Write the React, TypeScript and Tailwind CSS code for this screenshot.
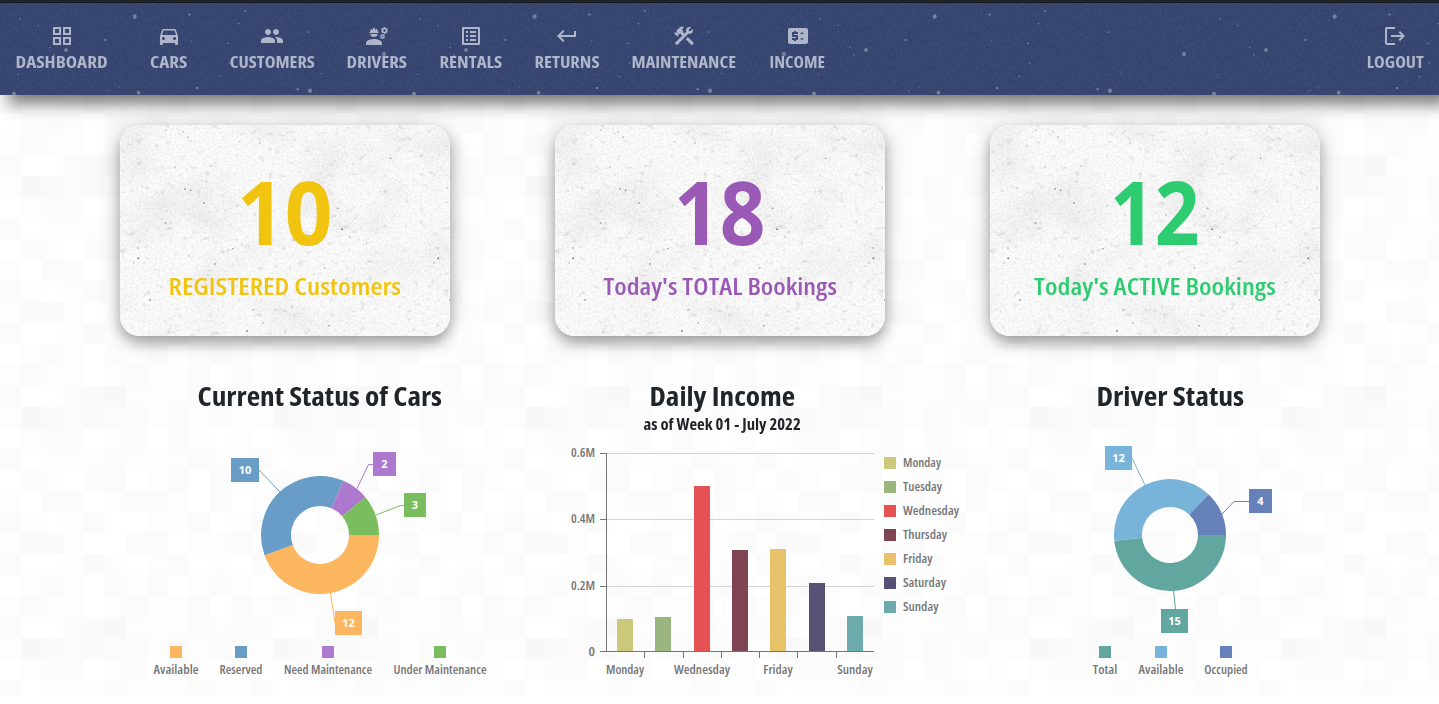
import { useLayoutEffect, useRef, useState } from "react";
import type { ReactNode } from "react";
import {
  MdDirectionsCar,
  MdPeople,
  MdEngineering,
  MdOutlineListAlt,
  MdKeyboardReturn,
  MdConstruction,
  MdPriceChange,
} from "react-icons/md";

/* ---------- text that fills a given width ---------- */

function Fit({ width, children }: { width: number; children: string }) {
  const ref = useRef<HTMLSpanElement>(null);
  const [scale, setScale] = useState(1);
  useLayoutEffect(() => {
    if (ref.current) setScale(width / ref.current.offsetWidth);
  }, [width]);
  return (
    <span className="flex justify-center" style={{ width }}>
      <span ref={ref} className="shrink-0 whitespace-nowrap" style={{ transform: `scaleX(${scale})` }}>
        {children}
      </span>
    </span>
  );
}

/* ---------- textures ---------- */

const tileShades = ["#ffffff", "#fdfdfd", "#fbfbfb", "#fafafa", "#f8f8f8"];
const tileRows = [
  "200234111212",
  "143232212121",
  "012201202101",
  "201112111211",
  "021022012021",
  "102201221020",
  "210120011201",
  "133100220112",
  "200131012010",
  "012102120121",
  "121101211202",
];

function PageTexture() {
  return (
    <svg className="absolute inset-0 -z-10" width="1439" height="695">
      <defs>
        <pattern id="tiles" x="0" y="155" width="252" height="231" patternUnits="userSpaceOnUse">
          {tileRows.map((row, r) =>
            row.split("").map((v, c) => (
              <rect key={`${r}-${c}`} x={c * 21} y={r * 21} width="21" height="21" fill={tileShades[Number(v)]} />
            )),
          )}
        </pattern>
      </defs>
      <rect width="1439" height="695" fill="url(#tiles)" />
    </svg>
  );
}

const navSpecks: [number, number, number][] = [
  [20, 19, 1], [38, 25.5, 0.8], [134.7, 16.5, 2], [189.5, 14.5, 1.3], [245, 11, 1.1], [238.5, 23.5, 1],
  [105.5, 40, 1.3], [50, 47.5, 0.8], [66, 50, 1.9], [54, 55, 0.9], [191.5, 40.5, 0.7], [228, 43.5, 1],
  [229.5, 63, 1], [308.5, 32, 1.1], [384, 54, 2], [219.5, 76.5, 0.9], [321.5, 73.5, 0.8], [18, 74.5, 0.8],
  [14, 94, 2], [138.5, 92.7, 1.7], [119.5, 87, 0.7], [109, 91, 0.8], [197, 88, 1.4], [297.7, 89.3, 1.4],
  [310, 90.7, 2],
];

function NavTexture() {
  return (
    <svg className="absolute inset-0 -z-10" width="1439" height="92">
      <defs>
        <filter id="navGrain" x="0" y="0" width="100%" height="100%">
          <feTurbulence type="fractalNoise" baseFrequency="0.5 0.3" numOctaves="3" seed="4" />
          <feColorMatrix values="0 0 0 0 1  0 0 0 0 1  0 0 0 0 1  0.7 0 0 0 -0.25" />
        </filter>
        <pattern id="navSpecks" x="0" y="-3" width="400" height="400" patternUnits="userSpaceOnUse">
          {navSpecks.map(([x, y, r], i) => (
            <ellipse key={i} cx={x} cy={y} rx={r} ry={r > 1.6 ? r * 1.1 : r * 0.7} fill="#c3ccd0" opacity={0.45} />
          ))}
        </pattern>
      </defs>
      <rect width="1439" height="92" fill="#34446f" />
      <rect width="1439" height="92" filter="url(#navGrain)" opacity="0.15" />
      <rect width="1439" height="92" fill="url(#navSpecks)" />
    </svg>
  );
}

const cardSpecks: [number, number, number][] = [
  [140, 18, 0.5], [270.7, 33.3, 0.6], [65, 64, 0.7], [70.7, 65.3, 0.7], [55, 42, 0.4], [84, 78, 0.7],
  [217.7, 83.3, 0.6], [222, 104.3, 1], [113, 123.7, 0.6], [18.3, 133.3, 1], [95, 139, 0.7], [204.7, 142.7, 0.5],
  [30, 175, 0.8], [133.3, 184.7, 0.6], [127, 206, 1], [209, 200.7, 0.6], [45.7, 98, 0.6], [176, 90, 0.5],
  [246.7, 118, 0.4], [69, 131, 0.4], [230, 112, 0.4], [234, 107, 0.4], [18, 123, 0.5], [46, 5, 0.4],
  [68, 12, 0.5], [143, 198, 0.5], [63, 7, 0.4], [91, 41, 0.4], [27, 63, 0.4], [14, 138, 0.4],
];

function CardTexture({ id }: { id: string }) {
  return (
    <svg className="absolute inset-0 -z-10" width="330" height="211">
      <defs>
        <filter id={`${id}Fine`} x="0" y="0" width="100%" height="100%">
          <feTurbulence type="fractalNoise" baseFrequency="0.42" numOctaves="3" seed="8" />
          <feColorMatrix values="0 0 0 0 0  0 0 0 0 0  0 0 0 0 0  0.7 0 0 0 -0.27" />
        </filter>
        <filter id={`${id}Cloud`} x="0" y="0" width="100%" height="100%">
          <feTurbulence type="fractalNoise" baseFrequency="0.018" numOctaves="5" seed="11" />
          <feColorMatrix values="0 0 0 0 0  0 0 0 0 0  0 0 0 0 0  0.12 0 0 0 -0.055" />
        </filter>
        <filter id={`${id}Pits`} x="0" y="0" width="100%" height="100%">
          <feTurbulence type="fractalNoise" baseFrequency="0.13 0.17" numOctaves="4" seed="21" />
          <feColorMatrix values="0 0 0 0 0.3  0 0 0 0 0.3  0 0 0 0 0.3  4 0 0 0 -2.6" />
        </filter>
        <pattern id={`${id}Specks`} width="300" height="300" patternUnits="userSpaceOnUse">
          {cardSpecks.map(([x, y, o], i) => (
            <ellipse key={i} cx={x} cy={y} rx={0.95} ry={0.75} fill="#444" opacity={o * 0.9} />
          ))}
        </pattern>
      </defs>
      <rect width="330" height="211" fill="#fcfcfc" />
      <rect width="330" height="211" filter={`url(#${id}Cloud)`} />
      <rect width="330" height="211" filter={`url(#${id}Fine)`} opacity="0.2" />
      <rect width="330" height="211" filter={`url(#${id}Pits)`} opacity="0.3" />
      <rect width="330" height="211" fill={`url(#${id}Specks)`} />
    </svg>
  );
}

/* ---------- navigation ---------- */

const GridIcon = () => (
  <svg width="24" height="24" viewBox="0 0 24 24" fill="currentColor">
    <path d="M3 3v8h8V3H3zm6 6H5V5h4v4zm-6 4v8h8v-8H3zm6 6H5v-4h4v4zm4-16v8h8V3h-8zm6 6h-4V5h4v4zm-6 4v8h8v-8h-8zm6 6h-4v-4h4v4z" />
  </svg>
);

const LogoutIcon = () => (
  <svg width="24" height="24" viewBox="0 0 24 24" fill="currentColor">
    <path d="m17 7-1.41 1.41L18.17 11H8v2h10.17l-2.58 2.58L17 17l5-5zM4 5h8V3H4c-1.1 0-2 .9-2 2v14c0 1.1.9 2 2 2h8v-2H4V5z" />
  </svg>
);

function NavItem({ icon, label, width }: { icon: ReactNode; label: string; width: number }) {
  return (
    <a className="flex min-w-[90px] flex-col items-center px-4 pt-[21px] text-[#afb6ca]">
      {icon}
      <span className="mt-0.5 text-[16px] leading-6 font-bold">
        <Fit width={width}>{label}</Fit>
      </span>
    </a>
  );
}

function NavBar() {
  return (
    <header className="relative isolate flex h-[92px] justify-between shadow-[9px_9px_15px_rgba(20,24,20,0.58)]">
      <NavTexture />
      <nav className="flex">
        <NavItem icon={<GridIcon />} label="DASHBOARD" width={92} />
        <NavItem icon={<MdDirectionsCar size={24} />} label="CARS" width={37} />
        <NavItem icon={<MdPeople size={24} />} label="CUSTOMERS" width={84.5} />
        <NavItem icon={<MdEngineering size={24} />} label="DRIVERS" width={61} />
        <NavItem icon={<MdOutlineListAlt size={24} />} label="RENTALS" width={63} />
        <NavItem icon={<MdKeyboardReturn size={24} />} label="RETURNS" width={65} />
        <NavItem icon={<MdConstruction size={24} />} label="MAINTENANCE" width={105} />
        <NavItem icon={<MdPriceChange size={24} />} label="INCOME" width={56} />
      </nav>
      <div className="-mr-px flex">
        <NavItem icon={<LogoutIcon />} label="LOGOUT" width={57.5} />
      </div>
    </header>
  );
}

/* ---------- stat cards ---------- */

interface StatProps {
  id: string;
  color: string;
  value: string;
  valueWidth: number;
  label: string;
  labelWidth: number;
}

function StatCard({ id, color, value, valueWidth, label, labelWidth }: StatProps) {
  return (
    <div className="rounded-[20px] shadow-[0_0_28px_rgba(0,0,0,0.13),0_7px_14px_rgba(0,0,0,0.33)]">
      <div className={`relative isolate flex h-[211px] flex-col items-center overflow-hidden rounded-[20px] ${color}`}>
        <CardTexture id={id} />
        <div className="mt-[38px] text-[87px] leading-[96px] font-bold [font-stretch:100%]">
          <Fit width={valueWidth}>{value}</Fit>
        </div>
        <div className="mt-[11px] text-[23px] leading-8 font-[640]">
          <Fit width={labelWidth}>{label}</Fit>
        </div>
      </div>
    </div>
  );
}

/* ---------- charts ---------- */

const label = "fill-[#767676] text-[12px] font-semibold";

interface TextProps {
  x: number;
  y: number;
  w: number;
  children: string;
}

function ChartText({ x, y, w, children }: TextProps) {
  return (
    <text x={x} y={y} textLength={w} lengthAdjust="spacingAndGlyphs" className={label}>
      {children}
    </text>
  );
}

interface Slice {
  value: number;
  color: string;
  name: string;
  nameWidth: number;
  keyX: number;
  box: [number, number, number];
  line: string;
}

function Donut({ cx, cy, R, r, slices, viewBox }: { cx: number; cy: number; R: number; r: number; slices: Slice[]; viewBox: string }) {
  const total = slices.reduce((s, d) => s + d.value, 0);
  let a = 0;
  return (
    <svg width="400" height="255" viewBox={viewBox}>
      {slices.map((s) => {
        const a0 = a;
        const a1 = a + (s.value / total) * Math.PI * 2;
        a = a1;
        const big = a1 - a0 > Math.PI ? 1 : 0;
        const pt = (rad: number, t: number) => `${cx + rad * Math.cos(t)} ${cy + rad * Math.sin(t)}`;
        const [bx, by, bw] = s.box;
        return (
          <g key={s.name}>
            <path
              d={`M${pt(R, a0)}A${R} ${R} 0 ${big} 1 ${pt(R, a1)}L${pt(r, a1)}A${r} ${r} 0 ${big} 0 ${pt(r, a0)}Z`}
              fill={s.color}
            />
            <polyline points={s.line} fill="none" stroke={s.color} strokeWidth="1" />
            <rect x={bx} y={by} width={bw} height="24" fill={s.color} />
            <text
              x={bx + bw / 2}
              y={by + 16}
              textAnchor="middle"
              className="fill-white text-[11px] font-bold [font-stretch:92%]"
            >
              {s.value}
            </text>
            <rect x={s.keyX} y="646" width="12" height="12" fill={s.color} />
            <ChartText x={s.keyX + 6 - s.nameWidth / 2} y={674} w={s.nameWidth}>
              {s.name}
            </ChartText>
          </g>
        );
      })}
    </svg>
  );
}

const carSlices: Slice[] = [
  { value: 12, color: "#fcb65f", name: "Available", nameWidth: 45, keyX: 170, box: [335, 611, 27], line: "335,623 334,616 330.5,593" },
  { value: 10, color: "#679dc6", name: "Reserved", nameWidth: 43, keyX: 235, box: [231, 458, 28], line: "259,470 280,492" },
  { value: 2, color: "#ac79ce", name: "Need Maintenance", nameWidth: 88, keyX: 322, box: [373, 452, 23], line: "373,464.5 368.5,464.5 357,488.5" },
  { value: 3, color: "#7abd5e", name: "Under Maintenance", nameWidth: 93, keyX: 434, box: [404, 493, 22], line: "404,505.5 400.5,505.5 376,515" },
];

const driverSlices: Slice[] = [
  { value: 15, color: "#61a69f", name: "Total", nameWidth: 24.5, keyX: 1099, box: [1161, 609, 27], line: "1175.5,609 1173.5,591" },
  { value: 12, color: "#78b4d9", name: "Available", nameWidth: 45, keyX: 1155, box: [1105, 446, 27], line: "1132,458 1145,485" },
  { value: 4, color: "#6681ba", name: "Occupied", nameWidth: 43.5, keyX: 1220, box: [1249, 489, 23], line: "1249,501.5 1234,501.5 1222,514" },
];

const days: { name: string; w: number; x: number; top: number; color: string; axis: boolean }[] = [
  { name: "Monday", w: 38, x: 617, top: 619, color: "#cbc87b", axis: true },
  { name: "Tuesday", w: 39, x: 655, top: 617, color: "#9ab57f", axis: false },
  { name: "Wednesday", w: 56, x: 694, top: 486, color: "#e55253", axis: true },
  { name: "Thursday", w: 44, x: 732, top: 550, color: "#7e4452", axis: false },
  { name: "Friday", w: 29.5, x: 770, top: 549, color: "#e8c268", axis: true },
  { name: "Saturday", w: 43, x: 809, top: 583, color: "#575176", axis: false },
  { name: "Sunday", w: 35.5, x: 847, top: 616, color: "#6caaac", axis: true },
];

function IncomeChart() {
  return (
    <svg width="450" height="255" viewBox="520 440 450 255">
      {[453.5, 519.5, 586.5].map((y, i) => (
        <g key={y}>
          <path d={`M607 ${y}H874`} stroke="#d3d3d3" />
          <path d={`M600 ${y}H607`} stroke="#767676" />
          <ChartText x={571} y={y + 3.5} w={24}>
            {["0.6M", "0.4M", "0.2M"][i]}
          </ChartText>
        </g>
      ))}
      <ChartText x={588.5} y={656} w={6.5}>
        0
      </ChartText>
      {days.map((d, i) => (
        <g key={d.name}>
          <rect x={d.x} y={d.top} width="16" height={651 - d.top} fill={d.color} />
          <rect x="884" y={457 + i * 24} width="12" height="12" fill={d.color} />
          <ChartText x={903} y={467 + i * 24} w={d.w}>
            {d.name}
          </ChartText>
          {d.axis && (
            <ChartText x={d.x + 8 - d.w / 2} y={674} w={d.w}>
              {d.name}
            </ChartText>
          )}
        </g>
      ))}
      <path d="M606.5 453V652M600 651.5H874" stroke="#767676" fill="none" />
      <path d="M644.5 652V658M683.5 652V658M721.5 652V658M759.5 652V658M797.5 652V658M836.5 652V658" stroke="#767676" />
    </svg>
  );
}

function ChartTitle({ width, children }: { width: number; children: string }) {
  return (
    <h2 className="text-[27px] leading-8 font-[680] text-[#212529]">
      <Fit width={width}>{children}</Fit>
    </h2>
  );
}

/* ---------- page ---------- */

export default function App() {
  return (
    <div className="relative isolate flex h-[704px] flex-col overflow-hidden bg-white font-['Open_Sans','Noto_Sans',sans-serif] [font-stretch:84%]">
      <PageTexture />
      <div className="h-[3px] shrink-0 border-b border-[#16181a] bg-[#212529]" />
      <NavBar />
      <main className="px-[120px]">
        <section className="mt-[30px] grid grid-cols-[330px_330px_330px] gap-x-[105px]">
          <StatCard id="reg" color="text-[#f1c40f]" value="10" valueWidth={96} label="REGISTERED Customers" labelWidth={233} />
          <StatCard id="total" color="text-[#9b59b6]" value="18" valueWidth={92} label="Today's TOTAL Bookings" labelWidth={233} />
          <StatCard id="active" color="text-[#2ecc71]" value="12" valueWidth={90} label="Today's ACTIVE Bookings" labelWidth={242} />
        </section>
        <section className="mt-[44px] grid grid-cols-[400px_450px_400px]">
          <div className="flex flex-col items-center">
            <ChartTitle width={245}>Current Status of Cars</ChartTitle>
            <div className="mt-7">
              <Donut cx={320} cy={535} R={59} r={29} slices={carSlices} viewBox="120 440 400 255" />
            </div>
          </div>
          <div className="flex flex-col">
            <div className="flex h-[60px] w-[404px] flex-col items-center">
              <ChartTitle width={146}>Daily Income</ChartTitle>
              <p className="text-[15.5px] leading-[25px] font-[680] text-[#212529]">
                <Fit width={157}>as of Week 01 - July 2022</Fit>
              </p>
            </div>
            <IncomeChart />
          </div>
          <div className="flex flex-col items-center">
            <ChartTitle width={148}>Driver Status</ChartTitle>
            <div className="mt-7">
              <Donut cx={1170} cy={535} R={56} r={28} slices={driverSlices} viewBox="970 440 400 255" />
            </div>
          </div>
        </section>
      </main>
    </div>
  );
}
